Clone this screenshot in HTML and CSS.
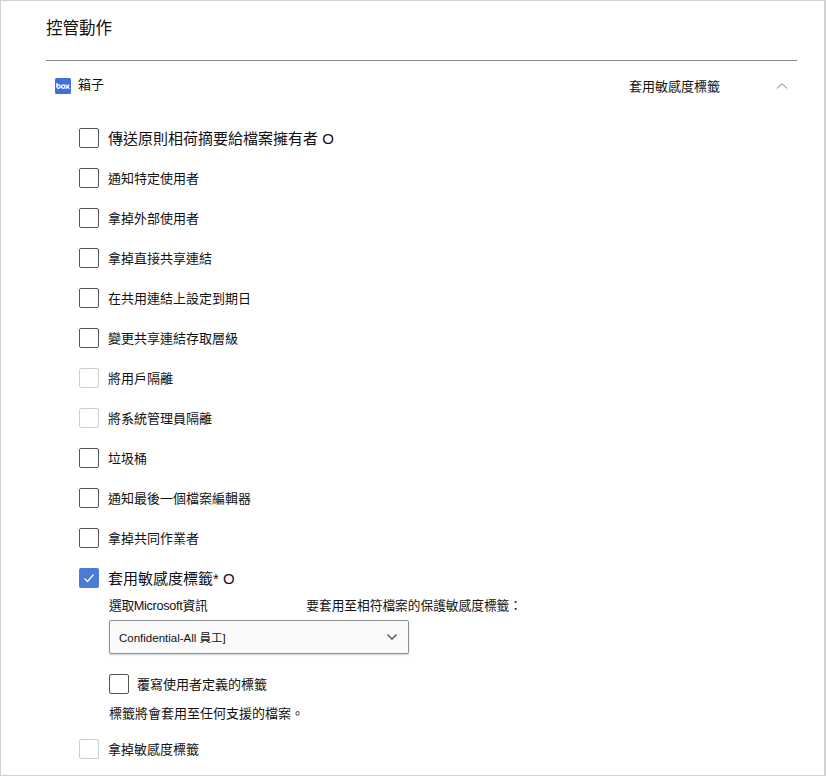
FILE: index.html
```html
<!DOCTYPE html>
<html lang="zh-Hant">
<head>
  <meta charset="UTF-8">
  <title>控管動作</title>
  <link rel="stylesheet" href="styles.css">
</head>
<body>
  <main class="panel">
    <h2 class="title">控管動作</h2>
    <div class="app-head">
      <svg class="box-logo" width="16" height="16" viewBox="0 0 16 16"><rect width="16" height="16" rx="1.5" fill="#3f6fd8"/><g fill="none" stroke="#fff" stroke-width="1.3"><circle cx="3.6" cy="8.6" r="1.7"/><circle cx="8.2" cy="8.6" r="1.7"/><path d="M1.9 5v3.6M10.6 6.6l3.8 4.2M14.4 6.6l-3.8 4.2"/></g></svg>
      <span class="app-name">箱子</span>
      <span class="app-action">套用敏感度標籤</span>
      <svg class="chevron" width="12" height="8" viewBox="0 0 12 8"><path d="M1 6.5l5-5 5 5" fill="none" stroke="#777" stroke-width="1"/></svg>
    </div>
    <ul class="actions">
      <li class="action"><span class="check"></span><span class="label large">傳送原則相荷摘要給檔案擁有者 <span class="info">O</span></span></li>
      <li class="action"><span class="check"></span><span class="label">通知特定使用者</span></li>
      <li class="action"><span class="check"></span><span class="label">拿掉外部使用者</span></li>
      <li class="action"><span class="check"></span><span class="label">拿掉直接共享連結</span></li>
      <li class="action"><span class="check"></span><span class="label">在共用連結上設定到期日</span></li>
      <li class="action"><span class="check"></span><span class="label">變更共享連結存取層級</span></li>
      <li class="action"><span class="check disabled"></span><span class="label">將用戶隔離</span></li>
      <li class="action"><span class="check disabled"></span><span class="label">將系統管理員隔離</span></li>
      <li class="action"><span class="check"></span><span class="label">垃圾桶</span></li>
      <li class="action"><span class="check"></span><span class="label">通知最後一個檔案編輯器</span></li>
      <li class="action"><span class="check"></span><span class="label">拿掉共同作業者</span></li>
      <li class="action"><span class="check checked"><svg width="14" height="14" viewBox="0 0 14 14"><path d="M2.5 7.5l3 3 6-7" fill="none" stroke="#fff" stroke-width="1.2"/></svg></span><span class="label large">套用敏感度標籤* <span class="info">O</span></span></li>
    </ul>
    <div class="sub">
      <p class="sub-text prompt"><span class="prompt-start">選取Microsoft資訊</span><span>要套用至相符檔案的保護敏感度標籤：</span></p>
      <div class="select"><span>Confidential-All 員工]</span>
        <svg width="12" height="8" viewBox="0 0 12 8"><path d="M1.5 1.5l4.5 4.5 4.5-4.5" fill="none" stroke="#666" stroke-width="1.6"/></svg>
      </div>
      <div class="action overwrite"><span class="check"></span><span class="label">覆寫使用者定義的標籤</span></div>
      <p class="sub-text note">標籤將會套用至任何支援的檔案。</p>
    </div>
    <div class="action last"><span class="check disabled"></span><span class="label">拿掉敏感度標籤</span></div>
  </main>
</body>
</html>
```
FILE: styles.css
```css
* {
  margin: 0;
  padding: 0;
  box-sizing: border-box;
}
html, body {
  height: 100%;
}
body {
  font-family: "Liberation Sans", "Noto Sans CJK TC", sans-serif;
  background-color: #ffffff;
  color: #111;
}
.panel {
  width: 826px;
  height: 776px;
  padding: 0 27px 0 45px;
  border: 1px solid #d2d2d2;
  border-width: 1px 2px 1px 1px;
  overflow: hidden;
}
.title {
  height: 60px;
  padding-top: 15px;
  font-size: 16.5px;
  font-weight: 400;
  line-height: 24px;
  border-bottom: 1px solid #8a8a8a;
}
.app-head {
  display: flex;
  align-items: center;
  height: 18px;
  margin-top: 16px;
  padding-left: 9px;
  font-size: 13px;
}
.box-logo {
  margin-right: 7px;
}
.app-name {
  flex: 1;
  padding-bottom: 5px;
}
.app-action {
  margin-right: 56px;
  padding-bottom: 1px;
}
.chevron {
  margin-right: 9px;
}
.actions {
  list-style: none;
  margin-top: 23px;
}
.action {
  display: flex;
  align-items: center;
  height: 40px;
  margin-left: 33px;
}
.check {
  display: flex;
  align-items: center;
  justify-content: center;
  width: 20px;
  height: 20px;
  margin-right: 9px;
  border: 1px solid #555;
  border-radius: 2px;
  background-color: #fff;
  flex-shrink: 0;
}
.check.disabled {
  border-color: #cfcfcf;
}
.check.checked {
  border: none;
  background-color: #4a7bd6;
}
.label {
  padding-bottom: 2px;
  font-size: 13px;
}
.label.large {
  font-size: 15px;
}
.sub {
  margin-left: 63px;
}
.sub-text {
  font-size: 13px;
  line-height: 18px;
}
.prompt {
  display: flex;
  gap: 99px;
  margin-top: -1px;
  font-size: 12.7px;
}
.prompt-start {
  letter-spacing: -0.3px;
}
.select {
  display: flex;
  align-items: center;
  justify-content: space-between;
  width: 300px;
  height: 34px;
  margin-top: 5px;
  padding: 0 10px 0 9px;
  font-size: 11.5px;
  border: 1px solid #8f8f8f;
  border-radius: 2px;
  background-color: #fafafa;
  box-shadow: 0 1px 2px rgba(0, 0, 0, 0.2);
}
.overwrite {
  margin: 10px 0 0;
}
.overwrite .check {
  margin-right: 8px;
}
.note {
  margin-top: 1px;
}
.last {
  margin-top: 6px;
}
```
